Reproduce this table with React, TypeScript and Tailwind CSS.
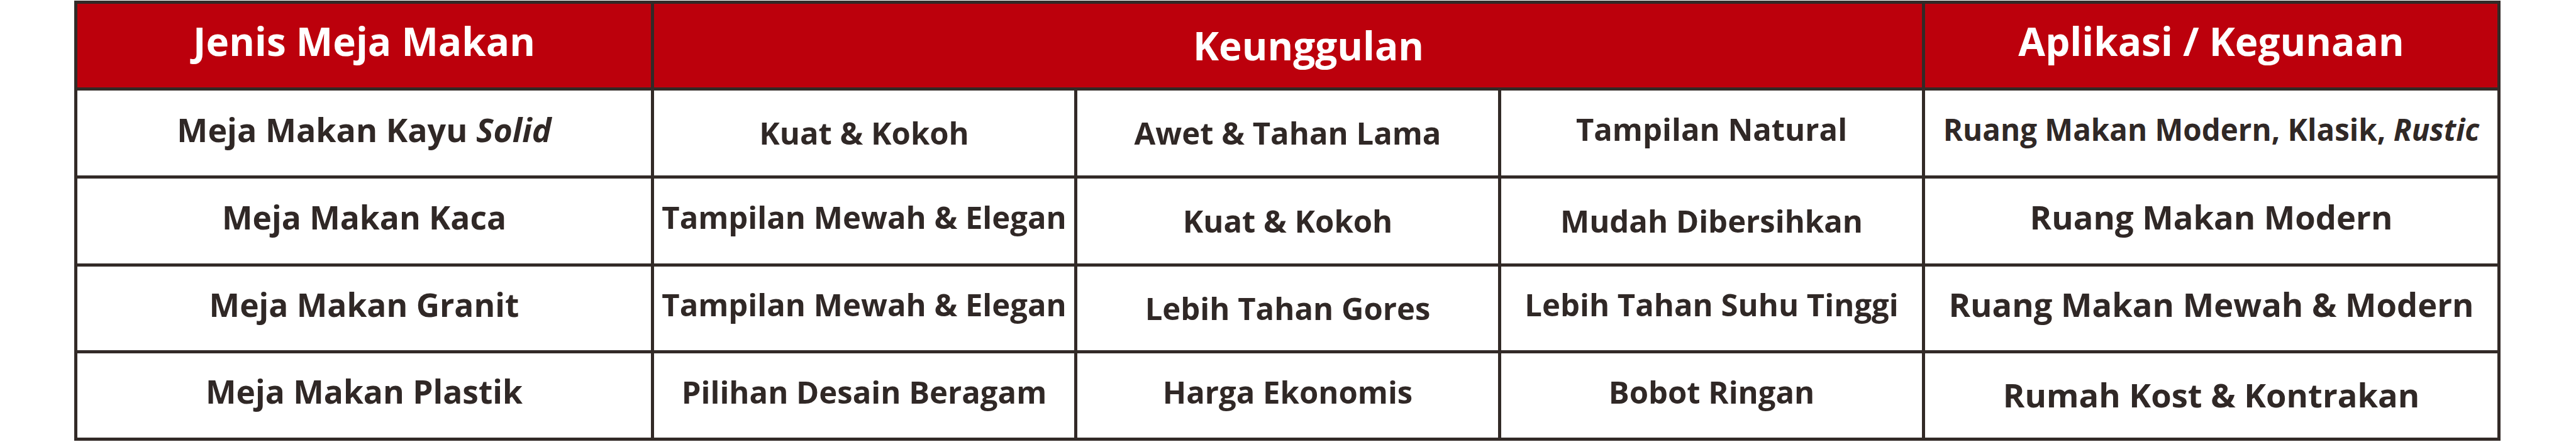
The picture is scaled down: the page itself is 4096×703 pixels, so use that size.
import { Fragment } from 'react';

type Cell = { text: React.ReactNode; low?: boolean; size?: string };

const headers = [
  { label: 'Jenis Meja Makan', span: 'col-span-1', pad: 'pb-[16px]' },
  { label: 'Keunggulan', span: 'col-span-3', pad: 'pb-[2px] pl-[65px]' },
  { label: 'Aplikasi / Kegunaan', span: 'col-span-1', pad: 'pb-[16px]' },
];

const rows: Cell[][] = [
  [
    { text: <>Meja Makan Kayu <i>Solid</i></>, size: 'text-[52px]' },
    { text: 'Kuat & Kokoh', low: true },
    { text: 'Awet & Tahan Lama', low: true },
    { text: 'Tampilan Natural' },
    { text: <>Ruang Makan Modern, Klasik, <i>Rustic</i></>, size: 'text-[47.5px]' },
  ],
  [
    { text: 'Meja Makan Kaca', size: 'text-[51.5px]' },
    { text: 'Tampilan Mewah & Elegan' },
    { text: 'Kuat & Kokoh', low: true },
    { text: 'Mudah Dibersihkan', low: true },
    { text: 'Ruang Makan Modern', size: 'text-[52.5px]' },
  ],
  [
    { text: 'Meja Makan Granit', size: 'text-[51.5px]' },
    { text: 'Tampilan Mewah & Elegan' },
    { text: 'Lebih Tahan Gores', low: true },
    { text: 'Lebih Tahan Suhu Tinggi' },
    { text: 'Ruang Makan Mewah & Modern', size: 'text-[52.5px]' },
  ],
  [
    { text: 'Meja Makan Plastik', size: 'text-[51.5px]' },
    { text: 'Pilihan Desain Beragam' },
    { text: 'Harga Ekonomis' },
    { text: 'Bobot Ringan' },
    { text: 'Rumah Kost & Kontrakan', low: true, size: 'text-[52.5px]' },
  ],
];

export default function App() {
  return (
    <div className="w-[4096px] h-[703px] bg-white pt-[1px] font-['Open_Sans',sans-serif] font-bold">
      <div className="ml-[118px] w-[3858px] grid grid-cols-[912px_668px_669px_669px_910px] grid-rows-[133px_135px_135px_133px_134px] gap-[5px] p-[5px] bg-[#322a27]">
        {headers.map((h) => (
          <div
            key={h.label}
            className={`${h.span} ${h.pad} flex items-center justify-center bg-[#bc000c] text-white text-[62px] leading-none whitespace-nowrap`}
          >
            <span>{h.label}</span>
          </div>
        ))}
        {rows.map((row, ri) => (
          <Fragment key={ri}>
            {row.map((cell, ci) => (
              <div
                key={ci}
                className={`flex items-center justify-center bg-white text-[#302826] leading-none whitespace-nowrap ${cell.size ?? 'text-[49px]'} ${cell.low ? 'pb-[1px]' : 'pb-[12px]'}`}
              >
                <span>{cell.text}</span>
              </div>
            ))}
          </Fragment>
        ))}
      </div>
    </div>
  );
}
